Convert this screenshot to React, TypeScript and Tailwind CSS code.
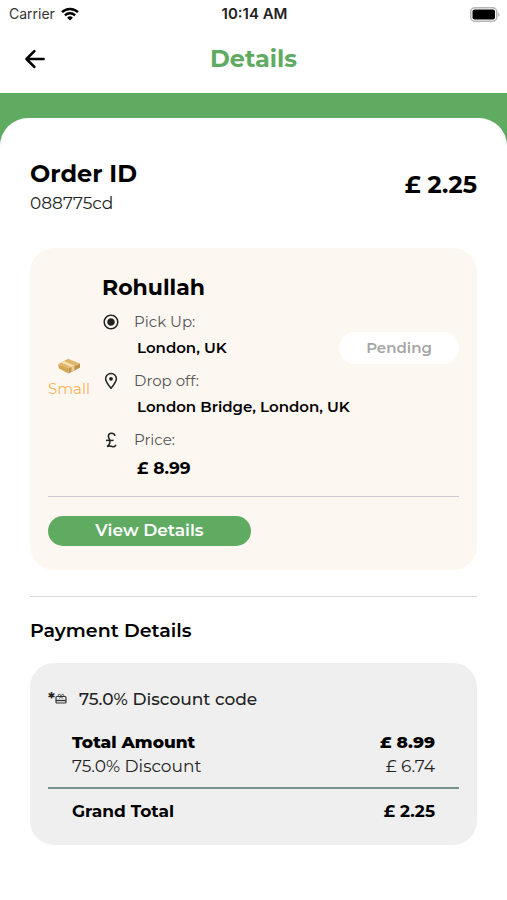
import type { ReactNode } from 'react';
import { IoArrowBack } from 'react-icons/io5';
import { MdRadioButtonChecked } from 'react-icons/md';

interface StopProps {
  icon: ReactNode;
  label: string;
  children: ReactNode;
}

const order = {
  id: '088775cd',
  total: '£ 2.25',
  customer: 'Rohullah',
  size: 'Small',
  status: 'Pending',
};

function WifiIcon() {
  return (
    <svg viewBox="0 0 18 14" className="h-[14px] w-[18px]" fill="none" stroke="black" strokeWidth="2.4" aria-hidden="true">
      <path d="M1 5.2a11.6 11.6 0 0 1 16 0" />
      <path d="M3.9 8.3a7.4 7.4 0 0 1 10.2 0" />
      <path d="M9 13.6 6.1 10.7a4.2 4.2 0 0 1 5.8 0Z" fill="black" stroke="none" />
    </svg>
  );
}

function BatteryIcon() {
  return (
    <svg viewBox="0 0 30 15" className="h-[15px] w-[30px]" aria-hidden="true">
      <rect x="0.75" y="0.75" width="26" height="13.5" rx="4" fill="white" stroke="#b5b5b5" strokeWidth="1.5" />
      <rect x="2.5" y="2.5" width="22.5" height="10" rx="2" fill="black" />
      <path d="M28.2 5.2c1.8.8 1.8 3.8 0 4.6Z" fill="#b5b5b5" />
    </svg>
  );
}

function ParcelIcon() {
  return (
    <svg viewBox="0 0 24 16" className="h-4 w-6" aria-hidden="true">
      <path d="M1 6.2 11.5 10v5.4L2 10.6Z" fill="#d3a650" />
      <path d="M11.5 10 23 5.6v4.2l-11.5 5.6Z" fill="#c2934a" />
      <path d="M1 6.2 11 .8l12 4.8L11.5 10Z" fill="#dfb767" />
      <path d="m6.8 3.1 10.6 4.6-3 1.2L4 4.6Z" fill="#f7e3b4" />
      <path d="m14.4 8.9 3-1.2v4.8l-3 1.4Z" fill="#e9cd92" />
    </svg>
  );
}

function PinIcon() {
  return (
    <svg viewBox="0 0 14 18" className="h-[18px] w-[14px]" fill="none" aria-hidden="true">
      <path d="M7 16.3C3.4 12 1.6 9.2 1.6 6.8a5.4 5.4 0 0 1 10.8 0C12.4 9.2 10.6 12 7 16.3Z" stroke="#222" strokeWidth="1.5" strokeLinejoin="round" />
      <circle cx="7" cy="6.8" r="1.9" fill="#222" />
    </svg>
  );
}

function PoundIcon() {
  return (
    <svg viewBox="0 0 12 18" className="h-[18px] w-3" fill="none" stroke="#222" strokeWidth="1.5" aria-hidden="true">
      <path d="M10 5C9.4 1.4 3.4 1.2 3.4 5.2c0 1.8 1.5 3.2 1.5 5.6 0 2.2-1.1 3.7-2.9 4.8 2-1 3.8-.8 5.2-.1 1.5.7 3.1.3 3.6-1.7" />
      <path d="M1 9.4h7.6" />
    </svg>
  );
}

function GiftCardIcon() {
  return (
    <svg viewBox="0 0 12 11" className="h-[11px] w-3" fill="none" stroke="#333" strokeWidth="1" aria-hidden="true">
      <rect x="1" y="3.5" width="10" height="6.5" rx="1" strokeWidth="1.2" />
      <path d="M1 7.5h10" strokeWidth="1.4" />
      <path d="M3.3 3.4C2.8.9 5 .8 6 2.6 7 .8 9.2.9 8.7 3.4M4.2 5.4 6 3.6l1.8 1.8" />
    </svg>
  );
}

function Stop({ icon, label, children }: StopProps) {
  return (
    <div>
      <dt className="flex h-6 items-center gap-[14px] text-[15px] text-[#555]">
        <span className="flex w-[18px] justify-center text-[#222]">{icon}</span>
        {label}
      </dt>
      <dd className="flex min-h-7 items-center pl-[35px] text-[15px] font-semibold">{children}</dd>
    </div>
  );
}

export default function App() {
  return (
    <div className="min-h-screen bg-white font-['Montserrat','Inter',sans-serif] text-black">
      <div className="grid h-7 grid-cols-3 items-center pr-[7px] pl-[9px] font-['Inter',sans-serif] text-sm">
        <div className="flex items-center gap-[6px] text-[#333]">
          Carrier
          <WifiIcon />
        </div>
        <div className="text-center text-[15px] font-semibold whitespace-nowrap text-[#222]">10:14 AM</div>
        <div className="flex justify-end">
          <BatteryIcon />
        </div>
      </div>

      <header className="grid h-[65px] grid-cols-3 items-center px-[21px] pb-1">
        <button type="button" aria-label="Back" className="w-7 text-[28px]">
          <IoArrowBack />
        </button>
        <h1 className="text-center text-2xl font-bold text-[#60ab62]">Details</h1>
      </header>

      <div className="bg-[#60ab62] pt-[25px]">
        <main className="rounded-t-[28px] bg-white px-[30px] pt-10 pb-12">
          <section className="flex items-center justify-between">
            <div>
              <h2 className="text-2xl leading-8 font-bold">Order ID</h2>
              <p className="text-[17px] leading-[26px] text-[#222]">{order.id}</p>
            </div>
            <p className="pb-1 text-2xl font-bold">{order.total}</p>
          </section>

          <section className="mt-8 rounded-3xl bg-[#fdf7f1] px-[18px] py-6">
            <div className="flex items-center border-b border-[#cfcbd6] pb-[10px]">
              <div className="flex w-[42px] shrink-0 flex-col items-center gap-1 text-[15px] text-[#fbb35a]">
                <ParcelIcon />
                {order.size}
              </div>
              <div className="ml-3 flex-1">
                <h3 className="text-[22px] leading-8 font-bold">{order.customer}</h3>
                <div className="relative mt-[6px]">
                  <dl className="flex flex-col gap-[7px]">
                    <Stop icon={<MdRadioButtonChecked size={18} />} label="Pick Up:">
                      London, UK
                    </Stop>
                    <Stop icon={<PinIcon />} label="Drop off:">
                      London Bridge, London, UK
                    </Stop>
                    <Stop icon={<PoundIcon />} label="Price:">
                      <span className="py-1 text-[17px] font-bold">£ 8.99</span>
                    </Stop>
                  </dl>
                  <span className="absolute top-[22px] right-0 flex h-8 w-[120px] items-center justify-center rounded-full bg-white text-[15px] font-semibold text-[#a5a5a5]">
                    {order.status}
                  </span>
                </div>
              </div>
            </div>
            <button
              type="button"
              className="mt-[19px] flex h-[30px] w-[203px] items-center justify-center rounded-full bg-[#60ab62] text-[17px] font-semibold text-white"
            >
              View Details
            </button>
          </section>

          <h2 className="mt-[26px] border-t border-[#d8d8d8] pt-5 text-[19px] leading-7 font-semibold">
            Payment Details
          </h2>

          <section className="mt-[18px] rounded-3xl bg-[#efefef] px-[18px] pt-6 pb-[22px]">
            <p className="flex items-center text-[17px] leading-6 font-medium text-[#222]">
              <span className="w-[7px] text-base font-bold">*</span>
              <GiftCardIcon />
              <span className="ml-3">75.0% Discount code</span>
            </p>
            <table className="mt-[19px] w-full text-[17px] leading-6">
              <tbody>
                <tr>
                  <th scope="row" className="pl-6 text-left font-extrabold">
                    Total Amount
                  </th>
                  <td className="pr-6 text-right font-extrabold">£ 8.99</td>
                </tr>
                <tr className="border-b-2 border-[#78928f] text-[#222]">
                  <th scope="row" className="pb-[9px] pl-6 text-left font-normal">
                    75.0% Discount
                  </th>
                  <td className="pr-6 pb-[9px] text-right">£ 6.74</td>
                </tr>
                <tr className="font-bold">
                  <th scope="row" className="pt-[10px] pl-6 text-left">
                    Grand Total
                  </th>
                  <td className="pt-[10px] pr-6 text-right">£ 2.25</td>
                </tr>
              </tbody>
            </table>
          </section>
        </main>
      </div>
    </div>
  );
}
